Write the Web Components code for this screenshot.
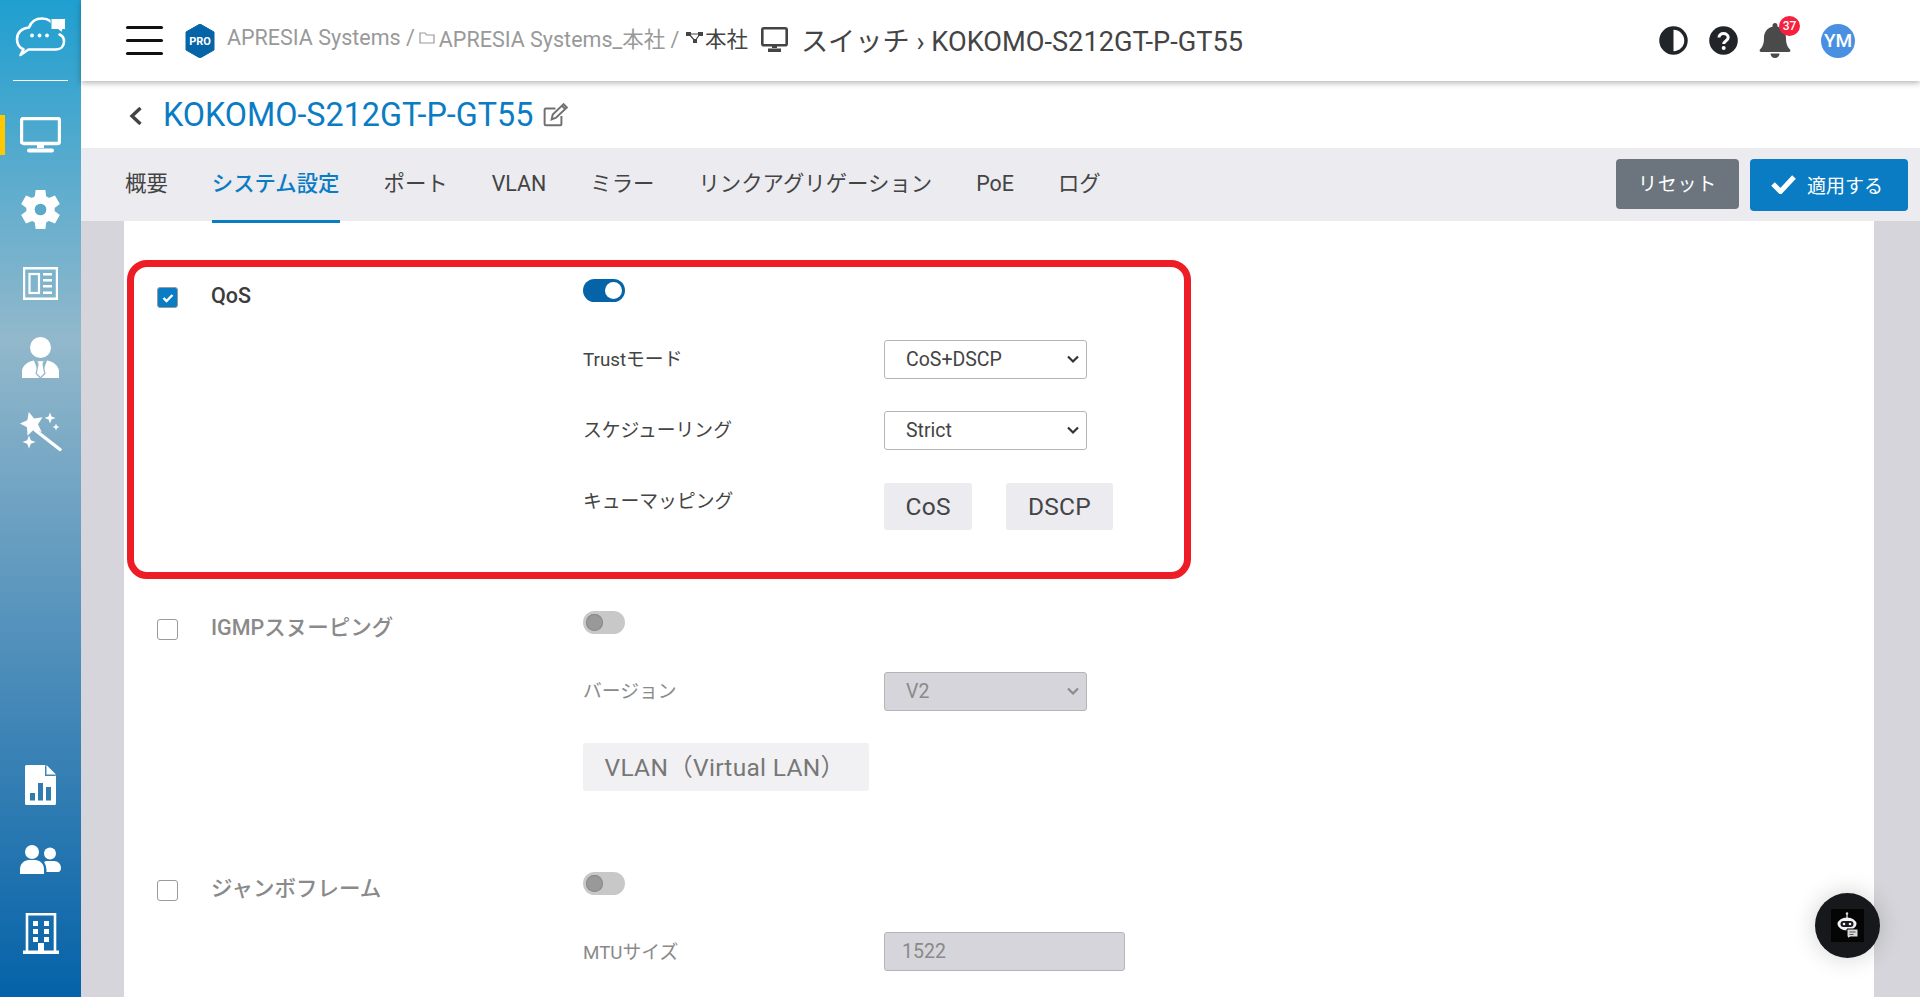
<!DOCTYPE html>
<html lang="ja">
<head>
<meta charset="utf-8">
<title>KOKOMO-S212GT-P-GT55</title>
<style>
  html, body { margin: 0; height: 100%; overflow: hidden; }
  body { font-family: Roboto, "Noto Sans CJK JP", sans-serif; color: #444; }
</style>
</head>
<body>
<app-shell>
  <side-nav slot="nav"></side-nav>
  <top-bar></top-bar>
  <title-bar name="KOKOMO-S212GT-P-GT55"></title-bar>
  <tab-bar></tab-bar>
  <form-card>
    <setting-section name="QoS" on style="height:332px">
      <setting-row label="Trustモード"><ui-select value="CoS+DSCP"></ui-select></setting-row>
      <setting-row label="スケジューリング"><ui-select value="Strict"></ui-select></setting-row>
      <setting-row label="キューマッピング">
        <soft-button>CoS</soft-button><soft-button>DSCP</soft-button>
      </setting-row>
    </setting-section>
    <setting-section name="IGMPスヌーピング" off style="height:261px">
      <setting-row label="バージョン"><ui-select value="V2" disabled></ui-select></setting-row>
      <soft-button disabled>VLAN（Virtual LAN）</soft-button>
    </setting-section>
    <setting-section name="ジャンボフレーム" off>
      <setting-row label="MTUサイズ"><ui-input value="1522"></ui-input></setting-row>
    </setting-section>
  </form-card>
  <bot-fab></bot-fab>
</app-shell>

<script>
// shared icons for the side nav
const ICONS = {
  monitor: `<svg viewBox="0 0 41 36" width="41" height="36"><rect x="1.5" y="1.5" width="38" height="25" rx="2" fill="none" stroke="currentColor" stroke-width="3.4"/><path d="M17 27h7v4h-7zM9 31.5h23a2 2 0 0 1 0 4H9a2 2 0 0 1 0-4z" fill="currentColor"/></svg>`,
  gear: `<svg viewBox="0 0 40 40" width="39" height="39"><g fill="#fff"><circle cx="20" cy="20" r="14.5"/><path d="M15 0h10l1 8H14zM15 40h10l1-8H14z"/><path d="M15 0h10l1 8H14zM15 40h10l1-8H14z" transform="rotate(60 20 20)"/><path d="M15 0h10l1 8H14zM15 40h10l1-8H14z" transform="rotate(120 20 20)"/></g><circle cx="20" cy="20" r="6" fill="#5aa9ca"/></svg>`,
  news: `<svg viewBox="0 0 35 33" width="35" height="33"><path d="M1 1.2h33v30.6H1z" fill="none" stroke="#fff" stroke-width="2.4"/><rect x="6.5" y="7" width="9.5" height="19" fill="none" stroke="#fff" stroke-width="2.2"/><path d="M20 6h9v2.6h-9zM20 12h9v2.6h-9zM20 18h9v2.6h-9zM20 24.400h9V27h-9z" fill="#fff"/></svg>`,
  person: `<svg viewBox="0 0 37 41" width="37" height="41"><circle cx="18.500" cy="10.500" r="10.500" fill="#fff"/><path d="M0 41v-6.500C0 28.500 6 24.500 12 23.500L18.500 41zM37 41v-6.500c0-6-6-10-12-11L18.500 41z" fill="#fff"/><path d="M14.500 23.500h8l-1.500 3.500 1.800 9.500-4.300 4.500-4.300-4.500L16 27z" fill="#fff" stroke="#93b8cb" stroke-width="1.300"/></svg>`,
  wand: `<svg viewBox="0 0 42 41" width="42" height="41"><path d="M8.800.9 14.100 7.400 22.500 6.200 18 13.300 21.700 20.900 13.600 18.800 7.500 24.700 7 16.300 0 12.400 7.300 9.200z" fill="#fff"/><path d="M15 19 40 38.500" stroke="#fff" stroke-width="3.400" stroke-linecap="round"/><path d="M30 1.500l1.500 4 4 1.500-4 1.500-1.500 4-1.500-4-4-1.500 4-1.500zM36 12.500l1 2.500 2.500 1-2.500 1-1 2.500-1-2.500-2.500-1 2.500-1zM9 24.500l1.800 4.700 4.700 1.800-4.700 1.800L9 37.500l-1.800-4.700L2.500 31l4.700-1.800z" fill="#fff"/></svg>`,
  report: `<svg viewBox="0 0 31 40" width="31" height="40"><path d="M1.500 0H20l11 11v27.500a1.500 1.500 0 0 1-1.500 1.500h-28A1.500 1.500 0 0 1 0 38.500v-37A1.500 1.500 0 0 1 1.500 0z" fill="#fff"/><path d="M20 0v11h11z" fill="#3f86b4"/><path d="M21.500 0 31 9.500h-9.500z" fill="#fff"/><path d="M5 28h5v7.500H5zM13 18h5v17.500h-5zM21 22h5v13.500h-5z" fill="#2f7cae"/></svg>`,
  users: `<svg viewBox="0 0 41 29" width="41" height="29"><circle cx="12" cy="7" r="7" fill="#fff"/><path d="M0 29v-5c0-5 4-9 9-9h6c5 0 9 4 9 9v5z" fill="#fff"/><circle cx="30" cy="8.500" r="6" fill="#fff"/><path d="M26 16h8c4 0 7 3 7 7 0 2-1 4-3 4H26.500c0-4-.5-7-2.500-10z" fill="#fff"/></svg>`,
  building: `<svg viewBox="0 0 36 41" width="36" height="41"><path d="M4 39V1.300h28V39" fill="none" stroke="#fff" stroke-width="2.600"/><path d="M0 37.500h36V41H0zM15 30h6v8h-6z" fill="#fff"/><path d="M10 8h5v5h-5zM21 8h5v5h-5zM10 16h5v5h-5zM21 16h5v5h-5zM10 24h5v5h-5zM21 24h5v5h-5z" fill="#fff"/></svg>`
};

class AppShell extends HTMLElement {
  constructor() {
    super();
    this.attachShadow({ mode: 'open' }).innerHTML = `
      <style>
        :host { display: flex; height: 997px; overflow: hidden; position: relative; }
        main { flex: 1; min-width: 0; display: flex; flex-direction: column; }
      </style>
      <slot name="nav"></slot>
      <main><slot></slot></main>`;
  }
}

class SideNav extends HTMLElement {
  constructor() {
    super();
    const item = (k, active) => `<div class="item">${active ? '<i></i>' : ''}${ICONS[k]}</div>`;
    this.attachShadow({ mode: 'open' }).innerHTML = `
      <style>
        :host {
          flex: 0 0 81px; display: flex; flex-direction: column; color: #fff;
          background: linear-gradient(#1f9fd0 0, #92b8cb 34%, #0562a8 100%);
        }
        .logo { height: 63px; margin: 0 13px 17px; border-bottom: 1px solid #fff; display: flex; justify-content: center; padding-top: 17px; }
        .item { height: 74px; display: flex; align-items: center; justify-content: center; position: relative; }
        .item i { position: absolute; left: 0; top: 17px; width: 5px; height: 40px; background: #ffc800; }
        .bottom { margin-top: auto; padding-bottom: 27px; }
      </style>
      <div class="logo">
        <svg viewBox="0 0 51 40" width="51" height="40">
          <path d="M40 11.500C38 5 33 1.500 27 1.500c-6 0-11 3.500-13 9C7 11 2 15.500 2 22c0 5.500 3 9 6.500 10.300L5.500 38l8-5.500H41c5 0 8-3.500 8-8 0-3.500-2-6-4.500-7" fill="none" stroke="#fff" stroke-width="2.600" stroke-linecap="round" stroke-linejoin="round"/>
          <path d="M36 1.500h14.500v11l-3 0-.5 3-4-3H36z" fill="#fff" stroke="#2aa2d0" stroke-width="1"/>
          <circle cx="17" cy="18.500" r="1.900" fill="#fff"/><circle cx="24.500" cy="18.500" r="1.900" fill="#fff"/><circle cx="32" cy="18.500" r="1.900" fill="#fff"/>
        </svg>
      </div>
      ${item('monitor', true)}${item('gear')}${item('news')}${item('person')}${item('wand')}
      <div class="bottom">${item('report')}${item('users')}${item('building')}</div>`;
  }
}

class TopBar extends HTMLElement {
  constructor() {
    super();
    this.attachShadow({ mode: 'open' }).innerHTML = `
      <style>
        :host {
          flex: 0 0 81px; height: 81px; display: flex; align-items: center; background: #fff;
          padding: 0 65px 0 45px; box-shadow: 0 2px 6px rgba(0,0,0,.3); position: relative; z-index: 2;
        }
        .burger { width: 37px; display: flex; flex-direction: column; gap: 9.500px; margin-right: 22px; }
        .burger b { height: 3.500px; background: #111; border-radius: 2px; }
        .pro { margin-right: 12px; display: block; }
        .crumb { font-size: 21.500px; color: #999; white-space: nowrap; display: flex; align-items: center; margin-top: -6px; }
        .crumb .dark { color: #444; }
        .crumb svg { margin: 0 4px 0 4px; }
        .mon { color: #444; margin: -3px 13px 0 13px; display: flex; }
        .page { font-size: 27.200px; color: #444; white-space: nowrap; margin-top: -3px; }
        .tools { margin-left: auto; display: flex; align-items: center; gap: 21px; }
        .bell { position: relative; width: 32px; height: 35px; margin-left: .5px; margin-right: 9px; }
        .bell span {
          position: absolute; left: 20px; top: -7px; width: 21px; height: 20px; border-radius: 50%; background: #f5213f;
          color: #fff; font-size: 12px; font-weight: 500; line-height: 20px; text-align: center;
        }
        .avatar { width: 34px; height: 34px; border-radius: 50%; background: #4a90e2; color: #fff; font-size: 19px; font-weight: 500; line-height: 34px; text-align: center; }
      </style>
      <div class="burger"><b></b><b></b><b></b></div>
      <svg class="pro" viewBox="0 0 30 34" width="30" height="34"><path d="M15 0 29 8v18l-14 8-14-8V8z" fill="#0564a8" stroke="#0564a8" stroke-linejoin="round"/><text x="15" y="21" font-family="Roboto" font-size="11" font-weight="700" fill="#fff" text-anchor="middle">PRO</text></svg>
      <div class="crumb">APRESIA Systems /<svg viewBox="0 0 16 13" width="16" height="13"><path d="M1 2h5l1.500 2H15v8H1z" fill="none" stroke="#999" stroke-width="1.200"/></svg>APRESIA Systems_本社 /<svg viewBox="0 0 17 13" width="17" height="13" style="margin:0 2px 0 6.500px"><path d="M3 3h11M3 3l6 7M14 3 9 10" stroke="#444" stroke-width="1.200"/><rect x="0" y="1" width="5" height="4" fill="#444"/><rect x="12" y="1" width="5" height="4" fill="#444"/><rect x="7" y="8" width="4" height="4" fill="#444"/></svg><span class="dark">本社</span></div>
      <div class="mon"><svg viewBox="0 0 27 25" width="27" height="25"><rect x="1.300" y="1.300" width="24.400" height="17" rx="1.500" fill="none" stroke="currentColor" stroke-width="2.600"/><path d="M11 18h5v3h-5zM7 21.500h13V25H7z" fill="currentColor"/></svg></div>
      <div class="page">スイッチ › KOKOMO-S212GT-P-GT55</div>
      <div class="tools">
        <svg viewBox="0 0 29 29" width="29" height="29"><circle cx="14.500" cy="14.500" r="12.500" fill="#fff" stroke="#212529" stroke-width="3.500"/><path d="M14.500 1a13.500 13.500 0 0 0 0 27z" fill="#212529"/></svg>
        <svg viewBox="0 0 29 29" width="29" height="29"><circle cx="14.500" cy="14.500" r="14.300" fill="#212529"/><path d="M10 11.500c0-2.500 2-4 4.500-4s4.700 1.500 4.700 4c0 3.500-4.500 3.500-4.500 6.500" fill="none" stroke="#fff" stroke-width="3"/><circle cx="14.700" cy="22" r="2" fill="#fff"/></svg>
        <div class="bell">
          <svg viewBox="0 0 32 35" width="32" height="35"><path d="M16 0c1.500 0 2.500 1 2.500 2.500v1.300C24 5 27 9.500 27 15c0 6 1.500 9 4 11.500.8.900.3 2.500-1 2.500H2c-1.300 0-1.800-1.600-1-2.500C3.500 24 5 21 5 15 5 9.500 8 5 13.500 3.800V2.500C13.500 1 14.500 0 16 0zM11.500 30.500h9c0 2.500-2 4.500-4.500 4.500s-4.500-2-4.500-4.500z" fill="#4a4a4a"/></svg>
          <span>37</span>
        </div>
        <div class="avatar">YM</div>
      </div>`;
  }
}

class TitleBar extends HTMLElement {
  constructor() {
    super();
    this.attachShadow({ mode: 'open' }).innerHTML = `
      <style>
        :host { flex: 0 0 67px; height: 67px; display: flex; align-items: center; background: #fff; padding-left: 47px; }
        h1 { margin: 0 10px 0 19px; font-size: 32.300px; font-weight: 400; color: #0a7cc4; white-space: nowrap; }
        svg { display: block; }
      </style>
      <svg viewBox="0 0 16 20" width="16" height="20" style="margin-top:2px"><path d="M12.500 2 4 10l8.500 8" fill="none" stroke="#444" stroke-width="3.400"/></svg>
      <h1 id="t"></h1>
      <svg viewBox="0 0 24 22" width="26" height="24" style="margin-top:1px"><path d="M17 12v7.500a1 1 0 0 1-1 1H2.500a1 1 0 0 1-1-1V6a1 1 0 0 1 1-1h9" fill="none" stroke="#707070" stroke-width="1.800"/><path d="M8 15l1-4.500L19 1l3 3-10 9.500zM17.500 2.500l3 3" fill="none" stroke="#707070" stroke-width="1.800"/></svg>`;
  }
  connectedCallback() { this.shadowRoot.getElementById('t').textContent = this.getAttribute('name'); }
}

class TabBar extends HTMLElement {
  constructor() {
    super();
    const tabs = ['概要', 'システム設定', 'ポート', 'VLAN', 'ミラー', 'リンクアグリゲーション', 'PoE', 'ログ'];
    this.attachShadow({ mode: 'open' }).innerHTML = `
      <style>
        :host { flex: 0 0 73px; height: 73px; display: flex; align-items: flex-start; background: #ebebf0; padding: 0 12px 0 44px; gap: 44px; font-size: 21.400px; position: relative; z-index: 1; }
        a { display: block; color: #444; white-space: nowrap; box-sizing: border-box; height: 75px; line-height: 26px; padding-top: 23px; }
        a.on { color: #0a7cc4; font-weight: 500; border-bottom: 3px solid #0a7cc4; }
        .acts { margin-left: auto; display: flex; gap: 11px; padding-top: 11px; }
        button { font: inherit; font-size: 19px; border: 0; color: #fff; border-radius: 4px; }
        .reset { width: 123px; height: 50px; background: #6c757d; letter-spacing: .8px; padding-bottom: 5px; }
        .apply { width: 158px; height: 52px; background: #0a7cc4; display: flex; align-items: center; justify-content: center; gap: 11px; padding: 0 4px 2px 0; }
      </style>
      ${tabs.map((t, i) => `<a class="${i === 1 ? 'on' : ''}">${t}</a>`).join('')}
      <div class="acts">
        <button class="reset">リセット</button>
        <button class="apply"><svg viewBox="0 0 25 20" width="25" height="20"><path d="M2 10 9.500 17.500 23 3" fill="none" stroke="#fff" stroke-width="5"/></svg>適用する</button>
      </div>`;
  }
}

class FormCard extends HTMLElement {
  constructor() {
    super();
    this.attachShadow({ mode: 'open' }).innerHTML = `
      <style>
        :host { flex: 1; min-height: 0; display: block; background: #d5d5db; padding: 0 46px 0 43px; overflow: hidden; }
        .card { background: #fff; height: 100%; padding: 58px 0 0 33px; box-sizing: border-box; position: relative; }
        /* annotation frame drawn over the first section */
        .mark { position: absolute; left: 3px; top: 39px; width: 1064px; height: 319px; box-sizing: border-box; border: 7px solid #ee1c25; border-radius: 20px; pointer-events: none; }
      </style>
      <div class="card"><slot></slot><div class="mark"></div></div>`;
  }
}

class SettingSection extends HTMLElement {
  constructor() {
    super();
    this.attachShadow({ mode: 'open' }).append(document.getElementById('section-tpl').content.cloneNode(true));
  }
  connectedCallback() {
    const $ = s => this.shadowRoot.querySelector(s);
    $('.name').textContent = this.getAttribute('name');
    if (this.hasAttribute('on')) {
      $('.box').classList.add('checked');
      $('.toggle').classList.add('on');
    } else {
      $('.name').classList.add('off');
    }
  }
}

class SettingRow extends HTMLElement {
  constructor() {
    super();
    this.attachShadow({ mode: 'open' }).innerHTML = `
      <style>
        :host { display: grid; grid-template-columns: 301px 1fr; height: 71px; font-size: 18.800px; }
        .lab { padding-top: 9px; line-height: 22px; white-space: nowrap; }
        .val { display: flex; gap: 34px; align-items: flex-start; }
      </style>
      <div class="lab"></div><div class="val"><slot></slot></div>`;
  }
  connectedCallback() {
    const lab = this.shadowRoot.querySelector('.lab');
    lab.textContent = this.getAttribute('label');
    if (this.closest('setting-section').hasAttribute('off')) lab.style.color = '#8a8a8a';
  }
}

class UiSelect extends HTMLElement {
  constructor() {
    super();
    this.attachShadow({ mode: 'open' }).innerHTML = `
      <style>
        :host { display: block; position: relative; }
        select {
          appearance: none; width: 203px; height: 39px; font: 19.500px Roboto, sans-serif; color: #444; background: #fff;
          border: 1px solid #b5b5b5; border-radius: 3px; padding: 0 0 0 21px; display: block;
        }
        select:disabled { background: #d5d5db; color: #8a8a8a; opacity: 1; }
        svg { position: absolute; right: 7px; top: 15px; pointer-events: none; }
        :host([disabled]) svg { opacity: .45; }
      </style>
      <select></select>
      <svg viewBox="0 0 14 9" width="14" height="9"><path d="M2 1.500 7 6.500 12 1.500" fill="none" stroke="#333" stroke-width="2.200"/></svg>`;
  }
  connectedCallback() {
    const s = this.shadowRoot.querySelector('select');
    s.append(new Option(this.getAttribute('value')));
    s.disabled = this.hasAttribute('disabled');
  }
}

class UiInput extends HTMLElement {
  constructor() {
    super();
    this.attachShadow({ mode: 'open' }).innerHTML = `
      <style>
        :host { display: block; margin-top: -1px; }
        input { width: 241px; height: 39px; box-sizing: border-box; font: 19.500px Roboto, sans-serif; color: #8a8a8a; background: #d5d5db; border: 1px solid #b5b5b5; border-radius: 3px; padding: 0 0 0 17px; display: block; }
      </style>
      <input disabled>`;
  }
  connectedCallback() { this.shadowRoot.querySelector('input').value = this.getAttribute('value'); }
}

class SoftButton extends HTMLElement {
  constructor() {
    super();
    this.attachShadow({ mode: 'open' }).innerHTML = `
      <style>
        :host { display: inline-flex; align-items: center; height: 47px; padding: 0 21.500px; margin-top: 1px; background: #ebebf0; border-radius: 3px; font-size: 24.500px; color: #444; letter-spacing: .3px; white-space: nowrap; box-sizing: content-box; }
        :host([disabled]) { background: #f1f1f4; color: #777; height: 44px; margin-top: 0; padding: 0 24px 4px 21.500px; }
      </style>
      <slot></slot>`;
  }
}

class BotFab extends HTMLElement {
  constructor() {
    super();
    this.attachShadow({ mode: 'open' }).innerHTML = `
      <style>
        :host { position: absolute; left: 1815px; top: 893px; width: 65px; height: 65px; border-radius: 50%; background: #16181c; box-shadow: 0 0 24px rgba(0,0,0,.18); display: flex; align-items: center; justify-content: center; }
        div { width: 33px; height: 33px; background: #050505; }
      </style>
      <div><svg viewBox="0 0 33 33" width="33" height="33">
        <path d="M16 4v5" stroke="#ddd" stroke-width="1.300"/><circle cx="16" cy="4.500" r="1.200" fill="#ddd"/>
        <ellipse cx="16" cy="15" rx="9.500" ry="6.500" fill="#f4f4f4"/>
        <rect x="9.500" y="12" width="13" height="6" rx="3" fill="#16181c"/>
        <circle cx="13" cy="15" r="1.300" fill="#f4f4f4"/><circle cx="19" cy="15" r="1.300" fill="#f4f4f4"/>
        <path d="M16 20h11v8h-8l-2 2v-2h-1z" fill="#d8d8d8" stroke="#050505" stroke-width="1"/>
        <path d="M18.500 23h6M18.500 25.500h4" stroke="#555" stroke-width="1"/>
      </svg></div>`;
  }
}
</script>

<template id="section-tpl">
  <style>
    :host { display: grid; grid-template-columns: 21px 33px 372px 1fr; }
    .box { width: 21px; height: 21px; box-sizing: border-box; border: 1px solid #9a9a9a; border-radius: 3px; margin-top: 8px; display: flex; align-items: center; justify-content: center; background: #fff; }
    .box svg { display: none; }
    .box.checked { background: #0a7cc4; }
    .box.checked svg { display: block; }
    .name { grid-column: 3; font-size: 21.500px; font-weight: 500; line-height: 24px; margin-top: 5px; color: #3c3c3c; white-space: nowrap; }
    .name.off { color: #8a8a8a; }
    .col { grid-column: 4; }
    .toggle { width: 42px; height: 23px; border-radius: 12px; background: #c8c8c8; position: relative; margin-bottom: 38px; }
    .toggle::after { content: ""; position: absolute; left: 3px; top: 3px; width: 17px; height: 17px; border-radius: 50%; background: #999; box-shadow: 0 0 0 1px #8a8a8a inset; }
    .toggle.on { background: #0564a8; }
    .toggle.on::after { left: auto; right: 3px; background: #fff; box-shadow: none; }
  </style>
  <div class="box"><svg viewBox="0 0 12 10" width="12" height="10"><path d="M1.500 5 4.500 8 10.500 2" fill="none" stroke="#fff" stroke-width="2.400"/></svg></div>
  <div></div>
  <div class="name"></div>
  <div class="col">
    <div class="toggle"></div>
    <slot></slot>
  </div>
</template>

<script>
customElements.define('app-shell', AppShell);
customElements.define('side-nav', SideNav);
customElements.define('top-bar', TopBar);
customElements.define('title-bar', TitleBar);
customElements.define('tab-bar', TabBar);
customElements.define('form-card', FormCard);
customElements.define('setting-section', SettingSection);
customElements.define('setting-row', SettingRow);
customElements.define('ui-select', UiSelect);
customElements.define('ui-input', UiInput);
customElements.define('soft-button', SoftButton);
customElements.define('bot-fab', BotFab);
</script>
</body>
</html>
